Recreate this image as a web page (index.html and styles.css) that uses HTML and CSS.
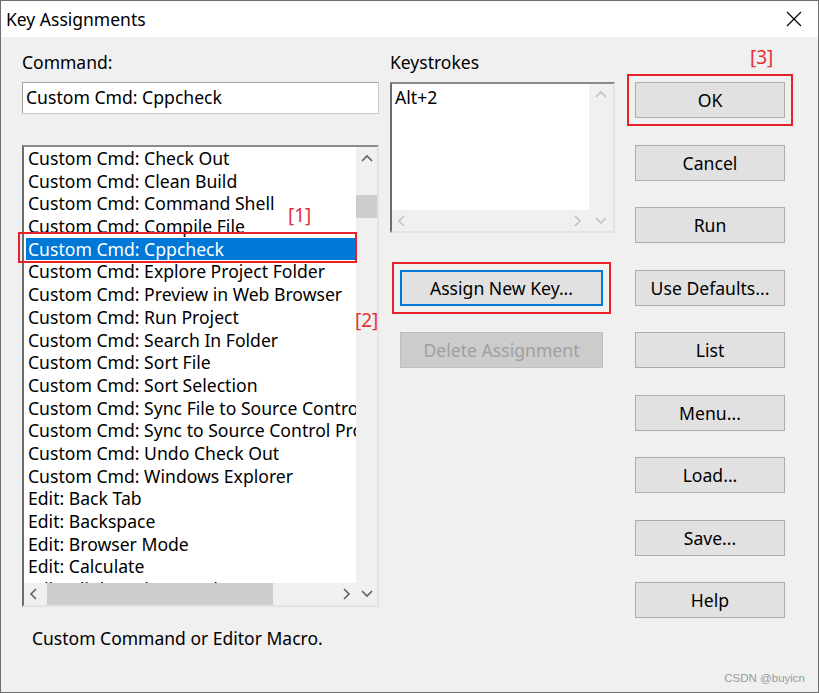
FILE: index.html
```html
<!DOCTYPE html>
<html>
<head>
    <meta charset="UTF-8">
    <title>Key Assignments</title>
    <link rel="stylesheet" href="styles.css">
</head>
<body>
    <div class="window">
        <div class="titlebar">
            <span class="title">Key Assignments</span>
            <svg class="close" width="16" height="16" viewBox="0 0 16 16">
                <path d="M1 1 L15 15 M15 1 L1 15" stroke="#000" stroke-width="1.2" fill="none"/>
            </svg>
        </div>

        <div class="dialog">
            <div class="col-left">
                <div class="label">Command:</div>
                <div class="textbox">Custom Cmd: Cppcheck</div>

                <div class="listbox">
                    <div class="list-items">
                        <div class="item">Custom Cmd: Check Out</div>
                        <div class="item">Custom Cmd: Clean Build</div>
                        <div class="item">Custom Cmd: Command Shell</div>
                        <div class="item">Custom Cmd: Compile File</div>
                        <div class="item selected">Custom Cmd: Cppcheck</div>
                        <div class="item">Custom Cmd: Explore Project Folder</div>
                        <div class="item">Custom Cmd: Preview in Web Browser</div>
                        <div class="item">Custom Cmd: Run Project</div>
                        <div class="item">Custom Cmd: Search In Folder</div>
                        <div class="item">Custom Cmd: Sort File</div>
                        <div class="item">Custom Cmd: Sort Selection</div>
                        <div class="item">Custom Cmd: Sync File to Source Control Project</div>
                        <div class="item">Custom Cmd: Sync to Source Control Project</div>
                        <div class="item">Custom Cmd: Undo Check Out</div>
                        <div class="item">Custom Cmd: Windows Explorer</div>
                        <div class="item">Edit: Back Tab</div>
                        <div class="item">Edit: Backspace</div>
                        <div class="item">Edit: Browser Mode</div>
                        <div class="item">Edit: Calculate</div>
                        <div class="item">Edit: Clipboard Append</div>
                    </div>
                    <div class="hscroll">
                        <svg class="arrow" width="20" height="20" viewBox="0 0 20 20"><polyline points="12,5 7,10 12,15" stroke="#606060" stroke-width="1.6" fill="none"/></svg>
                        <div class="htrack"><div class="hthumb"></div></div>
                        <svg class="arrow" width="20" height="20" viewBox="0 0 20 20"><polyline points="8,5 13,10 8,15" stroke="#606060" stroke-width="1.6" fill="none"/></svg>
                    </div>
                    <div class="vscroll">
                        <svg class="arrow" width="20" height="22" viewBox="0 0 20 22"><polyline points="5,14 10,9 15,14" stroke="#606060" stroke-width="1.6" fill="none"/></svg>
                        <div class="vtrack"><div class="vthumb"></div></div>
                        <svg class="arrow" width="20" height="22" viewBox="0 0 20 22"><polyline points="5,8 10,13 15,8" stroke="#606060" stroke-width="1.6" fill="none"/></svg>
                    </div>
                    <div class="mark-row"></div>
                    <span class="note note-1">[1]</span>
                </div>

                <div class="hint">Custom Command or Editor Macro.</div>
            </div>

            <div class="col-mid">
                <span class="note note-2">[2]</span>
                <div class="label">Keystrokes</div>
                <div class="keybox">
                    <div class="key-items">Alt+2</div>
                    <div class="key-hscroll">
                        <svg width="20" height="20" viewBox="0 0 20 20"><polyline points="12,5 7,10 12,15" stroke="#c2c2c2" stroke-width="1.6" fill="none"/></svg>
                        <svg width="20" height="20" viewBox="0 0 20 20"><polyline points="8,5 13,10 8,15" stroke="#c2c2c2" stroke-width="1.6" fill="none"/></svg>
                    </div>
                    <div class="key-vscroll">
                        <svg width="22" height="22" viewBox="0 0 22 22"><polyline points="6,13 11,8 16,13" stroke="#c2c2c2" stroke-width="1.6" fill="none"/></svg>
                        <svg width="22" height="22" viewBox="0 0 22 22"><polyline points="6,9 11,14 16,9" stroke="#c2c2c2" stroke-width="1.6" fill="none"/></svg>
                    </div>
                </div>
                <button class="btn btn-focus marked">Assign New Key...</button>
                <button class="btn btn-disabled">Delete Assignment</button>
            </div>

            <div class="col-right">
                <span class="note note-3">[3]</span>
                <button class="btn marked">OK</button>
                <button class="btn">Cancel</button>
                <button class="btn">Run</button>
                <button class="btn">Use Defaults...</button>
                <button class="btn">List</button>
                <button class="btn">Menu...</button>
                <button class="btn">Load...</button>
                <button class="btn">Save...</button>
                <button class="btn">Help</button>
            </div>
        </div>

        <div class="watermark">CSDN @buyicn</div>
    </div>
</body>
</html>
```

FILE: styles.css
```css
body {
    margin: 0;
    font-family: "Noto Sans", "Open Sans", sans-serif;
    background: #f0f0f0;
}

.window {
    position: relative;
    width: 819px;
    height: 693px;
    box-sizing: border-box;
    border: 1px solid #6e6e6e;
    background: #f0f0f0;
    overflow: hidden;
}

.titlebar {
    height: 36px;
    background: #ffffff;
    display: flex;
    align-items: center;
    justify-content: space-between;
    padding: 0 16px 0 5px;
}

.title {
    font-size: 17.5px;
    color: #000;
}

.close {
    display: block;
}

.dialog {
    display: grid;
    grid-template-columns: 357px 225px 150px;
    column-gap: 11px;
    padding-left: 21px;
}

.col-right {
    margin-left: 9px;
}

.label {
    margin-top: 15px;
    height: 20px;
    line-height: 20px;
    font-size: 17.5px;
    color: #000;
}

/* ---------- command textbox ---------- */

.textbox {
    margin-top: 10px;
    height: 32px;
    box-sizing: border-box;
    border: 1px solid #a0a0a0;
    border-right-color: #c8c8c8;
    border-bottom-color: #c8c8c8;
    background: #fff;
    padding-left: 3px;
    line-height: 28px;
    font-size: 17.6px;
}

/* ---------- list box ---------- */

.listbox {
    position: relative;
    margin-top: 31px;
    height: 462px;
    box-sizing: border-box;
    border: 2px solid #a0a0a0;
    border-top-color: #8a8a8a;
    border-left-color: #6d6d6d;
    border-right-color: #e3e3e3;
    border-bottom-color: #e3e3e3;
    background: #fff;
    display: grid;
    grid-template-columns: 1fr 21px;
    grid-template-rows: 1fr 22px;
}

.list-items {
    grid-column: 1;
    grid-row: 1;
    overflow: hidden;
    padding: 0 0 0 2px;
    font-size: 17.6px;
}

.item {
    height: 22.7px;
    line-height: 22.7px;
    padding-left: 2px;
    white-space: nowrap;
    color: #000;
}

.item.selected {
    background: #0078d7;
    color: #fff;
}

.hscroll {
    grid-column: 1;
    grid-row: 2;
    background: #f0f0f0;
    display: flex;
    align-items: center;
}

.arrow {
    display: block;
    flex: none;
}

.htrack {
    flex: 1;
    height: 100%;
}

.hthumb {
    margin-left: 3px;
    width: 226px;
    height: 100%;
    background: #cdcdcd;
}

.vscroll {
    grid-column: 2;
    grid-row: 1 / span 2;
    background: #f0f0f0;
    display: flex;
    flex-direction: column;
    align-items: center;
}

.vtrack {
    flex: 1;
    width: 100%;
}

.vthumb {
    margin-top: 26px;
    height: 23px;
    background: #cdcdcd;
}

.mark-row {
    position: absolute;
    left: -6px;
    top: 85px;
    width: 335px;
    height: 27px;
    border: 2px solid #e8202a;
}

.note {
    position: absolute;
    font-size: 19px;
    color: #e8303a;
    line-height: 20px;
}

.note-1 {
    left: 264px;
    top: 58px;
}

.hint {
    margin-top: 21px;
    margin-left: 10px;
    height: 20px;
    line-height: 20px;
    font-size: 17.5px;
}

/* ---------- keystrokes ---------- */

.col-mid {
    position: relative;
    display: flex;
    flex-direction: column;
    align-items: flex-start;
}

.note-2 {
    left: -35px;
    top: 273px;
}

.keybox {
    margin-top: 10px;
    width: 225px;
    height: 151px;
    box-sizing: border-box;
    border: 2px solid #6d6d6d;
    border-top-color: #8a8a8a;
    border-right-color: #e3e3e3;
    border-bottom-color: #e3e3e3;
    background: #fff;
    display: grid;
    grid-template-columns: 1fr 24px;
    grid-template-rows: 1fr 21px;
}

.key-items {
    grid-column: 1;
    grid-row: 1;
    padding: 2px 3px;
    font-size: 17.6px;
    line-height: 22px;
}

.key-hscroll {
    grid-column: 1;
    grid-row: 2;
    background: #f0f0f0;
    display: flex;
    align-items: center;
    justify-content: space-between;
    padding: 0 2px 0 0;
}

.key-hscroll svg,
.key-vscroll svg {
    display: block;
}

.key-vscroll {
    grid-column: 2;
    grid-row: 1 / span 2;
    background: #f0f0f0;
    display: flex;
    flex-direction: column;
    justify-content: space-between;
    align-items: center;
}

/* ---------- buttons ---------- */

.btn {
    display: block;
    width: 150px;
    height: 36px;
    box-sizing: border-box;
    background: #e1e1e1;
    border: 1px solid #adadad;
    font-family: inherit;
    font-size: 17.6px;
    color: #000;
    padding: 0;
}

.col-mid .btn {
    width: 203px;
    margin-left: 10px;
}

.btn-focus {
    margin-top: 37px;
    border: 2px solid #0078d7;
}

.btn-disabled {
    margin-top: 26px;
    background: #cccccc;
    border-color: #bfbfbf;
    color: #a0a0a0;
}

.marked {
    outline: 2px solid #e8202a;
    outline-offset: 6px;
}

.col-right {
    position: relative;
    display: flex;
    flex-direction: column;
    gap: 26.5px;
    padding-top: 45px;
}

.note-3 {
    left: 115px;
    top: 10px;
}

.watermark {
    position: absolute;
    right: 13px;
    bottom: 8px;
    font-family: "Liberation Sans", sans-serif;
    font-size: 11.5px;
    color: #9a9a9a;
}
```
